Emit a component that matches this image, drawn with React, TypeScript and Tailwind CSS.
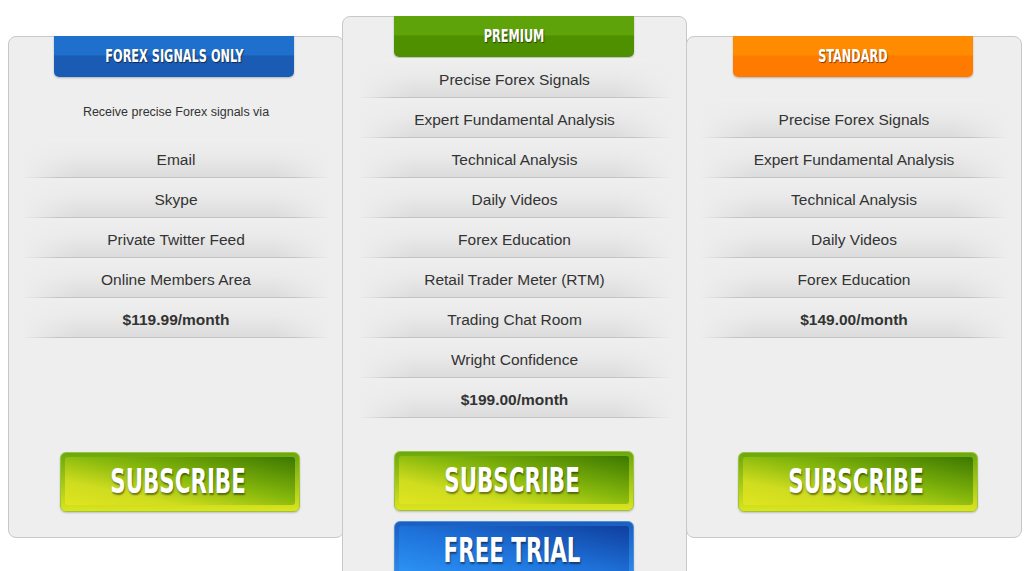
import React from "react";

const body = "font-['Liberation_Sans',Arial,sans-serif]";
const narrow = "font-['DejaVu_Sans_Condensed','DejaVu_Sans',sans-serif] font-bold";

type RibbonColor = "blue" | "green" | "orange";

const ribbonStyles: Record<RibbonColor, string> = {
  blue: "bg-[linear-gradient(to_bottom,#1f6fcd_0%,#1f6fcd_47%,#1a5bb4_48%,#1a5bb4_100%)]",
  green: "bg-[linear-gradient(to_bottom,#5fa30a_0%,#5fa30a_47%,#4f9000_48%,#4f9000_100%)]",
  orange: "bg-[linear-gradient(to_bottom,#ff8c00_0%,#ff8c00_47%,#ff7b00_48%,#ff7b00_100%)]",
};

function Ribbon({ label, color, className }: { label: string; color: RibbonColor; className?: string }) {
  return (
    <div
      className={`relative -mt-px flex h-[41px] w-[240px] items-center justify-center rounded-b-[5px] shadow-[0_1px_2px_rgba(0,0,0,0.25)] ${ribbonStyles[color]} ${className ?? ""}`}
    >
      <span
        className={`${narrow} inline-block scale-x-[0.74] whitespace-nowrap text-[17px] uppercase text-white [text-shadow:1px_1px_1px_rgba(0,0,0,0.55)]`}
      >
        {label}
      </span>
    </div>
  );
}

function Row({ children, bold }: { children: React.ReactNode; bold?: boolean }) {
  return (
    <div className="relative flex h-[40px] flex-col">
      <div className="flex flex-1 items-center justify-center pt-[4px] bg-[linear-gradient(to_right,#eeeeee_0%,rgba(238,238,238,0)_18%,rgba(238,238,238,0)_82%,#eeeeee_100%),linear-gradient(to_bottom,#efefef_0%,#eaeaea_45%,#dcdcdc_100%)]">
        <span className={`${body} text-[15.5px] text-[#333333] ${bold ? "font-bold" : ""}`}>{children}</span>
      </div>
      <div className="h-px bg-[linear-gradient(to_right,rgba(200,200,200,0)_0%,#c4c4c4_12%,#c4c4c4_88%,rgba(200,200,200,0)_100%)]" />
    </div>
  );
}

function ActionButton({ label, blue, className }: { label: string; blue?: boolean; className?: string }) {
  const outer = blue
    ? "border-[#4a90dc] bg-[linear-gradient(to_bottom,#1b5fc0,#2f8ef0)]"
    : "border-[#9cc43a] bg-[linear-gradient(to_bottom,#6aa80f,#dce41f)]";
  const inner = blue
    ? "bg-[linear-gradient(to_top_right,#2d93f5_0%,#1f74dc_45%,#0f3f9e_100%)]"
    : "bg-[linear-gradient(to_top_right,#e0e520_0%,#cfdc1f_25%,#86b80c_55%,#3c7800_100%)]";
  return (
    <div
      className={`w-[240px] h-[60px] rounded-[6px] border p-[4px] pb-[6px] shadow-[0_1px_2px_rgba(0,0,0,0.2)] ${outer} ${className ?? ""}`}
    >
      <div className={`flex h-full w-full items-center justify-center rounded-[3px] ${inner}`}>
        <span
          className={`${narrow} -ml-[4px] inline-block scale-x-[0.72] whitespace-nowrap text-[33px] leading-none text-white [text-shadow:1px_2px_2px_rgba(0,0,0,0.45)]`}
        >
          {label}
        </span>
      </div>
    </div>
  );
}

export default function App() {
  return (
    <div className="flex h-[571px] w-[1030px] items-start overflow-hidden bg-white pl-[8px]">
      {/* Forex signals only */}
      <div className="mt-[36px] flex h-[502px] w-[336px] flex-col rounded-[8px] border border-[#c8c8c8] bg-[#eeeeee]">
        <Ribbon label="Forex Signals Only" color="blue" className="ml-[45px]" />
        <div className={`${body} h-[61px] pt-[27px] text-center text-[12.5px] leading-[16px] text-[#333333]`}>
          Receive precise Forex signals via
        </div>
        <div className="mx-[12px] flex flex-col">
          <Row>Email</Row>
          <Row>Skype</Row>
          <Row>Private Twitter Feed</Row>
          <Row>Online Members Area</Row>
          <Row bold>$119.99/month</Row>
        </div>
        <ActionButton label="SUBSCRIBE" className="ml-[51px] mt-auto mb-[25px]" />
      </div>

      {/* Premium */}
      <div className="relative z-10 -ml-[2px] mt-[16px] flex h-[600px] w-[345px] flex-col rounded-[8px] border border-[#c8c8c8] bg-[#eeeeee]">
        <Ribbon label="Premium" color="green" className="ml-[51px]" />
        <div className="mx-[14px] mt-px flex flex-col">
          <Row>Precise Forex Signals</Row>
          <Row>Expert Fundamental Analysis</Row>
          <Row>Technical Analysis</Row>
          <Row>Daily Videos</Row>
          <Row>Forex Education</Row>
          <Row>Retail Trader Meter (RTM)</Row>
          <Row>Trading Chat Room</Row>
          <Row>Wright Confidence</Row>
          <Row bold>$199.00/month</Row>
        </div>
        <ActionButton label="SUBSCRIBE" className="ml-[51px] mt-[33px]" />
        <ActionButton label="FREE TRIAL" blue className="ml-[51px] mt-[10px]" />
      </div>

      {/* Standard */}
      <div className="-ml-[1px] mt-[36px] flex h-[502px] w-[336px] flex-col rounded-[8px] border border-[#c8c8c8] bg-[#eeeeee]">
        <Ribbon label="Standard" color="orange" className="ml-[46px]" />
        <div className="h-[21px]" />
        <div className="mx-[12px] flex flex-col">
          <Row>Precise Forex Signals</Row>
          <Row>Expert Fundamental Analysis</Row>
          <Row>Technical Analysis</Row>
          <Row>Daily Videos</Row>
          <Row>Forex Education</Row>
          <Row bold>$149.00/month</Row>
        </div>
        <ActionButton label="SUBSCRIBE" className="ml-[51px] mt-auto mb-[25px]" />
      </div>
    </div>
  );
}
